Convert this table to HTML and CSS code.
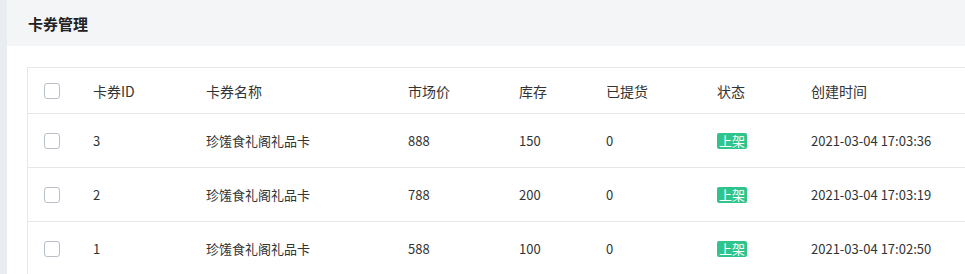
FILE: index.html
```html
<!DOCTYPE html>
<html lang="zh-CN">
<head>
<meta charset="utf-8">
<title>卡券管理</title>
<link rel="stylesheet" href="styles.css">
</head>
<body>
<div class="page">
  <div class="side"></div>
  <main class="main">
    <header class="head">卡券管理</header>
    <section class="content">
      <div class="table">
        <div class="row thead">
          <div class="cell first"><span class="check"></span></div>
          <div class="cell">卡券ID</div>
          <div class="cell">卡券名称</div>
          <div class="cell">市场价</div>
          <div class="cell">库存</div>
          <div class="cell">已提货</div>
          <div class="cell">状态</div>
          <div class="cell">创建时间</div>
        </div>
        <div class="row">
          <div class="cell first"><span class="check"></span></div>
          <div class="cell">3</div>
          <div class="cell">珍馐食礼阁礼品卡</div>
          <div class="cell">888</div>
          <div class="cell">150</div>
          <div class="cell">0</div>
          <div class="cell"><span class="tag">上架</span></div>
          <div class="cell">2021-03-04 17:03:36</div>
        </div>
        <div class="row">
          <div class="cell first"><span class="check"></span></div>
          <div class="cell">2</div>
          <div class="cell">珍馐食礼阁礼品卡</div>
          <div class="cell">788</div>
          <div class="cell">200</div>
          <div class="cell">0</div>
          <div class="cell"><span class="tag">上架</span></div>
          <div class="cell">2021-03-04 17:03:19</div>
        </div>
        <div class="row">
          <div class="cell first"><span class="check"></span></div>
          <div class="cell">1</div>
          <div class="cell">珍馐食礼阁礼品卡</div>
          <div class="cell">588</div>
          <div class="cell">100</div>
          <div class="cell">0</div>
          <div class="cell"><span class="tag">上架</span></div>
          <div class="cell">2021-03-04 17:02:50</div>
        </div>
      </div>
    </section>
  </main>
</div>
</body>
</html>
```

FILE: styles.css
```css
* { box-sizing: border-box; }
html, body { margin: 0; padding: 0; background: #fff; }
body {
  font-family: "Noto Sans CJK SC", "Noto Sans", sans-serif;
  font-size: 13px;
  color: #333;
  overflow: hidden;
}
.page { display: flex; width: 965px; height: 274px; overflow: hidden; }
.side { width: 7px; flex: none; background: #e9edf1; }
.main { flex: 1; min-width: 0; background: #fff; }
.head {
  height: 46px;
  background: #f4f5f7;
  padding-left: 21px;
  padding-top: 1px;
  display: flex;
  align-items: center;
  font-size: 15px;
  font-weight: bold;
  color: #222;
}
.content { padding: 21px 0 0 20px; }
.table {
  border-top: 1px solid #e4e6ea;
  border-left: 1px solid #e4e6ea;
}
.row {
  display: grid;
  grid-template-columns: 65px 113px 202px 111px 87px 111px 94px 1fr;
  height: 54px;
  border-bottom: 1px solid #e4e6ea;
  align-items: center;
}
.row.thead { height: 46px; font-size: 14px; }
.cell { white-space: nowrap; line-height: 18px; }
.cell.first { padding-left: 16px; display: flex; align-items: center; }
.check {
  display: inline-block;
  width: 16px;
  height: 16px;
  border: 1px solid #b9c0c8;
  border-radius: 3px;
  background: #fff;
}
.tag {
  display: inline-block;
  background: #2fc48b;
  color: #fff;
  font-size: 13px;
  line-height: 16px;
  height: 16px;
  padding: 0 2px;
  border-radius: 2px;
}
```
